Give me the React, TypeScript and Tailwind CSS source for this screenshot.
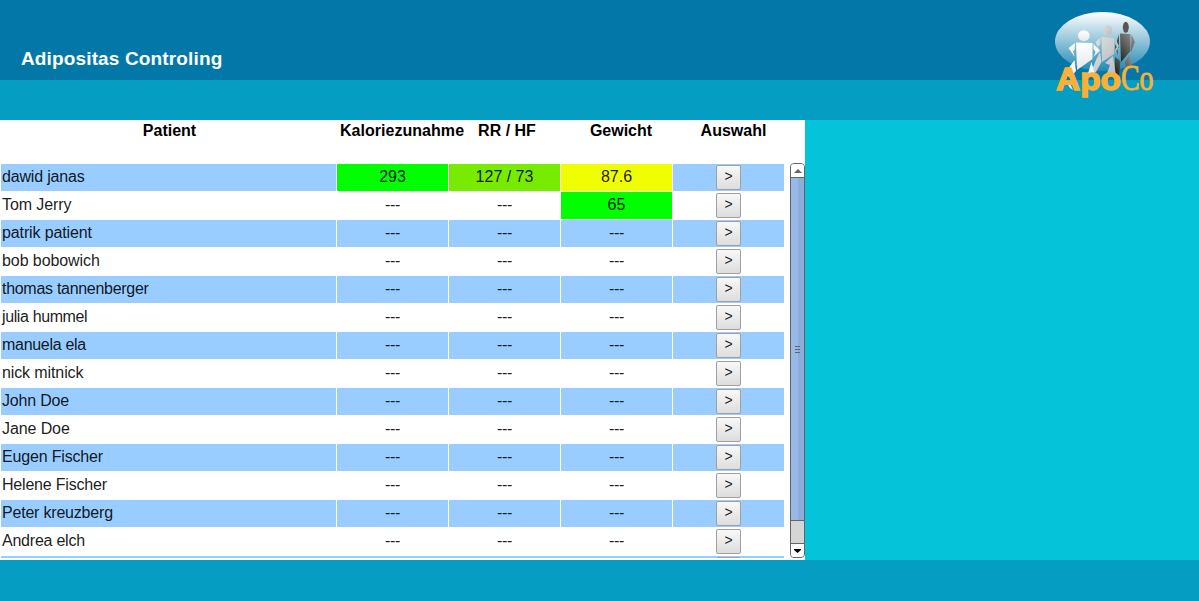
import React from "react";

type Cell = { text: string; tone?: string };
type Row = { name: string; tracking: string; cells: [Cell, Cell, Cell] };

const none: Cell = { text: "---" };
const blank: Cell = { text: "" };
const empty = (name: string, tracking: string): Row => ({ name, tracking, cells: [none, none, none] });

const rows: Row[] = [
  {
    name: "dawid janas",
    tracking: "tracking-[-0.17px]",
    cells: [
      { text: "293", tone: "bg-[#00ff00]" },
      { text: "127 / 73", tone: "bg-[#77eb00]" },
      { text: "87.6", tone: "bg-[#f0ff00]" },
    ],
  },
  { name: "Tom Jerry", tracking: "tracking-[-0.1px]", cells: [none, none, { text: "65", tone: "bg-[#00ff00]" }] },
  empty("patrik patient", "tracking-[-0.12px]"),
  empty("bob bobowich", "tracking-[-0.08px]"),
  empty("thomas tannenberger", "tracking-[-0.29px]"),
  empty("julia hummel", "tracking-[-0.38px]"),
  empty("manuela ela", "tracking-[-0.29px]"),
  empty("nick mitnick", "tracking-[-0.11px]"),
  empty("John Doe", "tracking-[-0.18px]"),
  empty("Jane Doe", "tracking-[-0.1px]"),
  empty("Eugen Fischer", "tracking-[-0.17px]"),
  empty("Helene Fischer", "tracking-[-0.2px]"),
  empty("Peter kreuzberg", "tracking-[-0.2px]"),
  empty("Andrea elch", "tracking-[-0.23px]"),
  { name: "", tracking: "", cells: [blank, blank, blank] },
];

function Logo() {
  return (
    <svg className="h-[92px] w-[104px]" viewBox="1052 8 104 92">
      <defs>
        <linearGradient id="sky" x1="0" y1="0" x2="0" y2="1">
          <stop offset="0" stopColor="#fff" />
          <stop offset="1" stopColor="#fff" stopOpacity="0.12" />
        </linearGradient>
        <linearGradient id="light" x1="0" y1="0" x2="0" y2="1">
          <stop offset="0" stopColor="#fff" />
          <stop offset="1" stopColor="#e5e8eb" />
        </linearGradient>
        <linearGradient id="mid" x1="0" y1="0" x2="1" y2="1">
          <stop offset="0" stopColor="#dddfe0" />
          <stop offset="1" stopColor="#b8bbbe" />
        </linearGradient>
        <linearGradient id="dark" x1="1" y1="0" x2="0" y2="1">
          <stop offset="0" stopColor="#9a9a9a" />
          <stop offset="1" stopColor="#101010" />
        </linearGradient>
      </defs>
      <ellipse cx="1102.5" cy="41.5" rx="47.5" ry="29.5" fill="url(#sky)" />
      <g fill="url(#dark)">
        <ellipse cx="1125.8" cy="27.3" rx="3" ry="5.5" fill="#555" />
        <path d="M1120 33.5 L1130.5 34 V51 L1121 62 Z M1119 34 V48 L1117 47 L1118 55 L1115 47 Z M1131.5 34.5 L1135 42 L1131 52 Z" />
        <path d="M1115 57 L1120.5 61 L1119 76 L1115 79 Z M1125 62 L1130 54 L1132 70 L1126 68 Z" />
      </g>
      <g fill="url(#mid)">
        <ellipse cx="1107.6" cy="30.5" rx="4.5" ry="5.6" />
        <path d="M1101.5 37 L1114 38 V54 L1102 62 Z M1100.5 37.5 L1100 45 L1098 46 L1099 51 L1095.5 42 Z M1115 38.5 L1119 46 L1114.5 54 L1116.5 47 Z" />
        <path d="M1100 52 L1101.5 62 L1096 72 L1090 75 L1096 60 Z M1105 63 L1113 56 L1116 76 H1106 L1110 65 Z" />
      </g>
      <g fill="url(#light)">
        <ellipse cx="1083.8" cy="35.7" rx="5.8" ry="5.5" />
        <path d="M1076 42.5 L1092.5 43 V59 L1077 70 Z M1075 43 L1074.6 50 L1073 51 L1074.8 57 L1068.5 48 Z M1093.5 44 L1100 50.5 L1093.5 57 L1095.5 52 L1093.5 49 Z" />
        <path d="M1074.5 60 L1076 71 L1070 78 L1065 73 Z M1091.5 62 L1095 75 H1087.5 Z M1069.5 82 L1073 90 L1070 88 L1066 82 Z" />
      </g>
      <text x="1056" y="90" fill="#fbb034" stroke="#fbb034" fontFamily="Liberation Sans" fontWeight="700" fontSize="31" strokeWidth="1.3" textLength="65" lengthAdjust="spacingAndGlyphs">Apo</text>
      <text x="1121" y="89.5" fill="#fbb034" stroke="#fbb034" fontFamily="Liberation Serif" fontSize="35" strokeWidth=".9" textLength="32.5" lengthAdjust="spacingAndGlyphs">Co</text>
    </svg>
  );
}

function Scrollbar() {
  return (
    <div className="mt-[43px] ml-[5px] flex h-[395px] w-[15px] flex-col overflow-hidden rounded border border-[#5d6570] bg-[#d6d5d3]">
      <div className="flex h-[14px] shrink-0 items-center justify-center border-b border-[#5d6570] bg-white">
        <svg className="h-[4px] w-[8px]" viewBox="0 0 8 4"><path d="M0 4 L4 0 L8 4Z" fill="#5d6570" /></svg>
      </div>
      <div className="flex h-[343px] shrink-0 flex-col items-center justify-center gap-[2px] border-b border-[#5d6570] bg-linear-to-r from-[#98b8e5] from-55% to-[#8eacda] to-55%">
        <div className="h-px w-[5px] bg-[#5d6570]" />
        <div className="h-px w-[5px] bg-[#5d6570]" />
        <div className="h-px w-[5px] bg-[#5d6570]" />
      </div>
      <div className="h-[23px] shrink-0 border-b border-[#5d6570]" />
      <div className="flex grow items-center justify-center bg-white">
        <svg className="h-[4px] w-[7px]" viewBox="0 0 7 4"><path d="M0 0 L7 0 V1 L3.5 4 L0 1Z" fill="#000" /></svg>
      </div>
    </div>
  );
}

export default function App() {
  return (
    <div className="h-[601px] w-[1199px] overflow-hidden bg-[#059dc1] font-['Liberation_Sans',Arial,sans-serif] text-base text-black">
      <header className="flex h-[120px] justify-between bg-linear-to-b from-[#0378a8] from-[80px] to-[#059dc1] to-[80px]">
        <h1 className="pt-[45px] pl-[21px] text-[19px] leading-[27px] font-bold tracking-[0.14px] text-white">Adipositas Controling</h1>
        <div className="pt-2 pr-[43px]"><Logo /></div>
      </header>
      <main className="flex h-[440px] bg-[#05c4da]">
        <section className="flex w-[805px] bg-white">
          <div className="flex w-[785px] flex-col">
            <div className="grid h-[44px] shrink-0 grid-cols-[339px_126px_84px_144px_81px] text-center leading-[21px] font-bold whitespace-nowrap">
              <div>Patient</div>
              <div className="tracking-[0.04px]">Kaloriezunahme</div>
              <div>RR / HF</div>
              <div>Gewicht</div>
              <div>Auswahl</div>
            </div>
            <div className="h-[394px] overflow-hidden pl-px">
              {rows.map((row, i) => {
                const stripe = i % 2 === 0 ? "bg-[#99ccff]" : "bg-white";
                const gap = i === 14 ? "gap-0" : "gap-px";
                const cols = i === 14 ? "grid-cols-[336px_112px_112px_112px_111px]" : "grid-cols-[335px_111px_111px_111px_111px]";
                return (
                  <div key={i} className={`mb-px grid h-[27px] leading-[25px] text-black/90 ${gap} ${cols}`}>
                    <div className={`pl-px ${row.tracking} ${stripe}`}>{row.name}</div>
                    {row.cells.map((cell, j) => (
                      <div key={j} className={`text-center ${cell.text === "---" ? "tracking-[-0.33px]" : "tracking-normal"} ${cell.tone ?? stripe}`}>{cell.text}</div>
                    ))}
                    <div className={`flex justify-center pt-px ${stripe}`}>
                      <button className="h-[25px] w-[25px] rounded-[2px] border border-[#a0a0a0] bg-linear-to-b from-[#f8f8f8] to-[#dddddd] pb-[2px] text-[14px] leading-[21px]">{i < 14 ? ">" : ""}</button>
                    </div>
                  </div>
                );
              })}
            </div>
          </div>
          <Scrollbar />
        </section>
      </main>
      <footer className="h-[41px] bg-[#059dc1]" />
    </div>
  );
}
